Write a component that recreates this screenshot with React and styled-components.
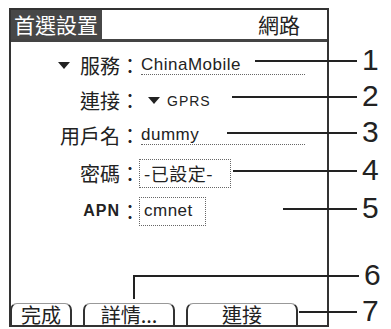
import React from 'react';
import styled, { createGlobalStyle } from 'styled-components';

const GlobalStyle = createGlobalStyle`
  body {
    margin: 0;
    background: #ffffff;
    font-family: "Noto Sans CJK TC", "Liberation Sans", sans-serif;
    color: #222;
  }
`;

// Whole picture: device screen plus the numbered callouts
const Page = styled.div`
  position: relative;
  width: 391px;
  height: 329px;
  padding: 8px 0 0 9px;
  box-sizing: border-box;
  overflow: hidden;
`;

// Palm screen frame
const Screen = styled.div`
  display: flex;
  flex-direction: column;
  width: 320px;
  height: 319px;
  box-sizing: border-box;
  border: 2px solid #333;
`;

const TitleBar = styled.div`
  display: flex;
  align-items: stretch;
  height: 29px;
  border-bottom: 3px solid #444;
`;

const TitleTab = styled.div`
  background: #474747;
  color: #fff;
  font-size: 21px;
  line-height: 28px;
  padding: 0 4px 0 3px;
`;

const TitleRight = styled.div`
  margin-left: auto;
  padding-right: 27px;
  font-size: 21px;
  line-height: 28px;
`;

const Form = styled.div`
  display: flex;
  flex-direction: column;
  padding-top: 6px;
`;

const Row = styled.div`
  display: flex;
  align-items: center;
  height: ${({ h }) => h}px;
`;

const Label = styled.div`
  display: flex;
  align-items: center;
  justify-content: flex-end;
  width: 129px;
  font-size: 20px;
  white-space: nowrap;
`;

const LatinLabel = styled.span`
  font-family: "Liberation Sans", sans-serif;
  font-weight: bold;
  font-size: 16px;
  letter-spacing: 1px;
`;

const Arrow = styled.span`
  display: inline-block;
  width: 0;
  height: 0;
  border-left: 6px solid transparent;
  border-right: 6px solid transparent;
  border-top: 7px solid #222;
  margin-right: ${({ gap }) => gap}px;
`;

const Field = styled.div`
  margin-left: 1px;
  width: ${({ w }) => w}px;
  border-bottom: 1px dotted #666;
  font-family: "Liberation Sans", sans-serif;
  font-size: 17px;
  letter-spacing: 0.5px;
  line-height: 19px;
  margin-top: -2px;
`;

const Trigger = styled.div`
  display: flex;
  align-items: center;
  margin-left: 8px;
  font-family: "Liberation Sans", sans-serif;
  font-size: 14px;
  letter-spacing: 1px;
`;

const Box = styled.div`
  margin-left: -1px;
  width: ${({ w }) => w}px;
  height: 29px;
  box-sizing: border-box;
  border: 1px dotted #666;
  display: flex;
  align-items: center;
  padding-left: 4px;
  font-size: ${({ cjk }) => (cjk ? 18 : 17)}px;
  font-family: ${({ cjk }) =>
    cjk ? '"Noto Sans CJK TC", sans-serif' : '"Liberation Sans", sans-serif'};
  letter-spacing: 0.5px;
`;

const Spacer = styled.div`
  flex: 1;
`;

const ButtonBar = styled.div`
  display: flex;
  gap: 11px;
  margin-left: -1px;
  height: 22px;
`;

const Button = styled.div`
  width: ${({ w }) => w}px;
  box-sizing: border-box;
  border: 1px solid #999;
  border-left: 2px solid #333;
  border-right: 2px solid #333;
  border-bottom: none;
  border-radius: 7px 7px 0 0;
  display: flex;
  align-items: center;
  justify-content: center;
  font-size: 20px;
  line-height: 20px;
  padding-top: 1px;
`;

// Callout lines pointing at each part of the screen
const Callout = styled.div`
  position: absolute;
  left: ${({ x }) => x}px;
  top: ${({ y }) => y - 1}px;
  display: flex;
  align-items: flex-start;
`;

const Line = styled.div`
  width: ${({ w }) => w}px;
  height: ${({ drop }) => (drop ? drop : 0)}px;
  border-top: 2px solid #222;
  border-left: ${({ drop }) => (drop ? '2px solid #222' : 'none')};
`;

const Num = styled.div`
  margin-left: 5px;
  margin-top: -16px;
  font-family: "Liberation Sans Narrow", "Liberation Sans", sans-serif;
  font-size: 30px;
  line-height: 32px;
`;

const callouts = [
  { n: 1, x: 255, y: 61 },
  { n: 2, x: 232, y: 97 },
  { n: 3, x: 227, y: 133 },
  { n: 4, x: 233, y: 171 },
  { n: 5, x: 283, y: 209 },
  { n: 6, x: 133, y: 276, drop: 22 },
  { n: 7, x: 299, y: 312 },
];

const App = () => {
  return (
    <Page>
      <GlobalStyle />
      <Screen>
        <TitleBar>
          <TitleTab>首選設置</TitleTab>
          <TitleRight>網路</TitleRight>
        </TitleBar>

        <Form>
          <Row h={35}>
            <Label>
              <Arrow gap={10} />
              服務：
            </Label>
            <Field w={164}>ChinaMobile</Field>
          </Row>
          <Row h={35}>
            <Label>連接：</Label>
            <Trigger>
              <Arrow gap={7} />
              GPRS
            </Trigger>
          </Row>
          <Row h={35}>
            <Label>用戶名：</Label>
            <Field w={164}>dummy</Field>
          </Row>
          <Row h={40}>
            <Label>密碼：</Label>
            <Box w={92} cjk>-已設定-</Box>
          </Row>
          <Row h={36}>
            <Label>
              <LatinLabel>APN</LatinLabel>：
            </Label>
            <Box w={67}>cmnet</Box>
          </Row>
        </Form>

        <Spacer />

        <ButtonBar>
          <Button w={62}>完成</Button>
          <Button w={92}>詳情...</Button>
          <Button w={112}>連接</Button>
        </ButtonBar>
      </Screen>

      {callouts.map((c) => (
        <Callout key={c.n} x={c.x} y={c.y}>
          <Line w={357 - c.x} drop={c.drop} />
          <Num>{c.n}</Num>
        </Callout>
      ))}
    </Page>
  );
};

export default App;
